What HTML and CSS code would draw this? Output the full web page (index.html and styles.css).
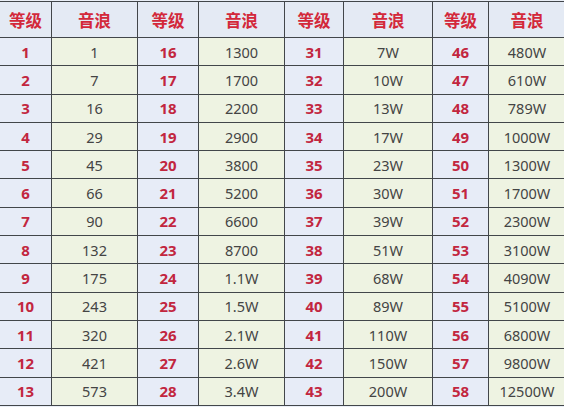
FILE: index.html
```html
<!DOCTYPE html>
<html lang="zh">
<head>
<meta charset="utf-8">
<link rel="stylesheet" href="styles.css">
</head>
<body>
<table class="grid">
<colgroup>
<col class="c1"><col class="c2"><col class="c3"><col class="c4"><col class="c5"><col class="c6"><col class="c7"><col class="c8">
</colgroup>
<thead>
<tr class="head">
<th>等级</th><th>音浪</th><th>等级</th><th>音浪</th><th>等级</th><th>音浪</th><th>等级</th><th>音浪</th>
</tr>
</thead>
<tbody>
<tr><td class="lv">1</td><td class="val">1</td><td class="lv">16</td><td class="val">1300</td><td class="lv">31</td><td class="val">7W</td><td class="lv">46</td><td class="val">480W</td></tr>
<tr><td class="lv">2</td><td class="val">7</td><td class="lv">17</td><td class="val">1700</td><td class="lv">32</td><td class="val">10W</td><td class="lv">47</td><td class="val">610W</td></tr>
<tr><td class="lv">3</td><td class="val">16</td><td class="lv">18</td><td class="val">2200</td><td class="lv">33</td><td class="val">13W</td><td class="lv">48</td><td class="val">789W</td></tr>
<tr><td class="lv">4</td><td class="val">29</td><td class="lv">19</td><td class="val">2900</td><td class="lv">34</td><td class="val">17W</td><td class="lv">49</td><td class="val">1000W</td></tr>
<tr><td class="lv">5</td><td class="val">45</td><td class="lv">20</td><td class="val">3800</td><td class="lv">35</td><td class="val">23W</td><td class="lv">50</td><td class="val">1300W</td></tr>
<tr><td class="lv">6</td><td class="val">66</td><td class="lv">21</td><td class="val">5200</td><td class="lv">36</td><td class="val">30W</td><td class="lv">51</td><td class="val">1700W</td></tr>
<tr><td class="lv">7</td><td class="val">90</td><td class="lv">22</td><td class="val">6600</td><td class="lv">37</td><td class="val">39W</td><td class="lv">52</td><td class="val">2300W</td></tr>
<tr><td class="lv">8</td><td class="val">132</td><td class="lv">23</td><td class="val">8700</td><td class="lv">38</td><td class="val">51W</td><td class="lv">53</td><td class="val">3100W</td></tr>
<tr><td class="lv">9</td><td class="val">175</td><td class="lv">24</td><td class="val">1.1W</td><td class="lv">39</td><td class="val">68W</td><td class="lv">54</td><td class="val">4090W</td></tr>
<tr><td class="lv">10</td><td class="val">243</td><td class="lv">25</td><td class="val">1.5W</td><td class="lv">40</td><td class="val">89W</td><td class="lv">55</td><td class="val">5100W</td></tr>
<tr><td class="lv">11</td><td class="val">320</td><td class="lv">26</td><td class="val">2.1W</td><td class="lv">41</td><td class="val">110W</td><td class="lv">56</td><td class="val">6800W</td></tr>
<tr><td class="lv">12</td><td class="val">421</td><td class="lv">27</td><td class="val">2.6W</td><td class="lv">42</td><td class="val">150W</td><td class="lv">57</td><td class="val">9800W</td></tr>
<tr><td class="lv">13</td><td class="val">573</td><td class="lv">28</td><td class="val">3.4W</td><td class="lv">43</td><td class="val">200W</td><td class="lv">58</td><td class="val">12500W</td></tr>
</tbody>
</table>
</body>
</html>
```
FILE: styles.css
```css
html, body {
  margin: 0;
  padding: 0;
  background: #e9eef6;
}
body {
  padding-top: 1px;
  width: 564px;
  height: 407px;
  overflow: hidden;
  font-family: "Noto Sans", "Noto Sans CJK SC", sans-serif;
}
.grid {
  border-collapse: collapse;
  table-layout: fixed;
  width: 566px;
  margin-left: -1px;
}
.c1 { width: 52px; }
.c2 { width: 86px; }
.c3 { width: 61px; }
.c4 { width: 86px; }
.c5 { width: 59px; }
.c6 { width: 89px; }
.c7 { width: 56px; }
.c8 { width: 77px; }
.grid th, .grid td {
  border: 1.5px solid #42464a;
  text-align: center;
  padding: 0;
  vertical-align: middle;
}
.head th {
  height: 34px;
  background: #e4eaf4;
  color: #d3283a;
  font-family: "Noto Sans CJK SC", sans-serif;
  font-weight: 700;
  font-size: 16.5px;
  padding-top: 1px;
}
.grid tbody td {
  height: 27.3px;
}
.lv {
  background: #e7ecf7;
  color: #c2263f;
  font-weight: 700;
  font-size: 15px;
}
.val {
  background: #eef3e2;
  color: #444444;
  font-size: 14.5px;
}
```
